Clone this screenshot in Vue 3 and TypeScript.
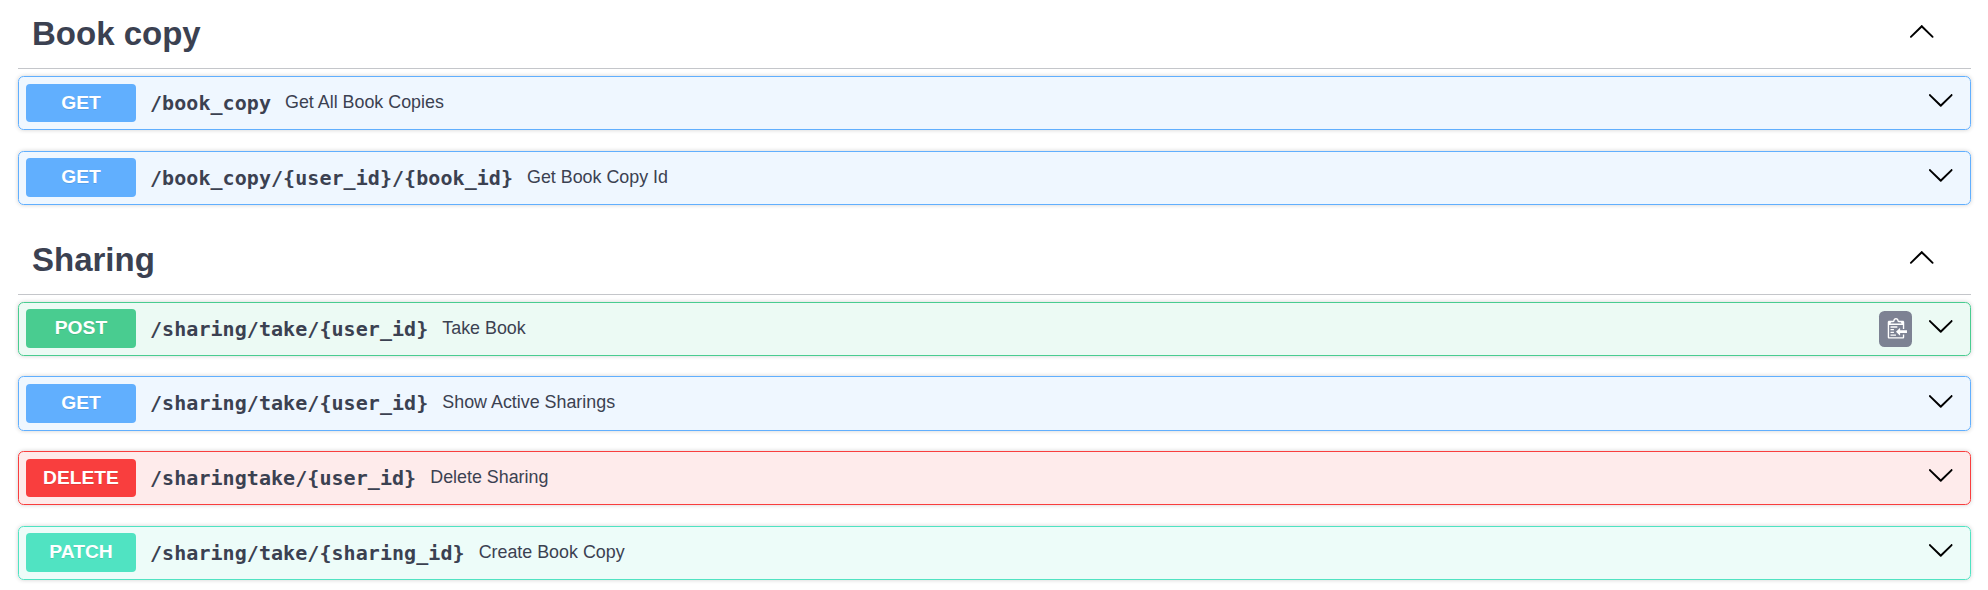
<script setup lang="ts">
type Method = 'get' | 'post' | 'delete' | 'patch'

interface Operation {
  method: Method
  path: string
  summary: string
  paste?: boolean
}

interface Section {
  name: string
  operations: Operation[]
}

const sections: Section[] = [
  {
    name: 'Book copy',
    operations: [
      { method: 'get', path: '/book_copy', summary: 'Get All Book Copies' },
      { method: 'get', path: '/book_copy/{user_id}/{book_id}', summary: 'Get Book Copy Id' },
    ],
  },
  {
    name: 'Sharing',
    operations: [
      { method: 'post', path: '/sharing/take/{user_id}', summary: 'Take Book', paste: true },
      { method: 'get', path: '/sharing/take/{user_id}', summary: 'Show Active Sharings' },
      { method: 'delete', path: '/sharingtake/{user_id}', summary: 'Delete Sharing' },
      { method: 'patch', path: '/sharing/take/{sharing_id}', summary: 'Create Book Copy' },
    ],
  },
]
</script>

<template>
  <main class="api">
    <section v-for="section in sections" :key="section.name" class="section">
      <header class="section-head">
        <h3 class="section-title">{{ section.name }}</h3>
        <svg class="arrow" viewBox="0 0 20 20" aria-hidden="true">
          <path d="M17.418 14.908c.272.268.709.268.979 0s.271-.701 0-.969l-7.908-7.83c-.27-.268-.707-.268-.979 0l-7.908 7.83c-.271.268-.271.701 0 .969.271.268.709.268.979 0L10 7.767l7.418 7.141z" />
        </svg>
      </header>
      <div class="operations">
        <article
          v-for="op in section.operations"
          :key="op.method + op.path"
          class="operation"
          :class="op.method"
        >
          <span class="method">{{ op.method.toUpperCase() }}</span>
          <span class="path">{{ op.path }}</span>
          <span class="summary">{{ op.summary }}</span>
          <span v-if="op.paste" class="paste">
            <svg viewBox="0 0 15 16" aria-hidden="true">
              <g transform="translate(2, -1)">
                <path d="M2 13h4v1H2v-1zm5-6H2v1h5V7zm2 3V8l-3 3 3 3v-2h5v-2H9zM4.5 9H2v1h2.5V9zM2 12h2.5v-1H2v1zm9 1h1v2c-.02.28-.11.52-.3.7-.19.18-.42.28-.7.3H1c-.55 0-1-.45-1-1V4c0-.55.45-1 1-1h3c0-1.11.89-2 2-2 1.11 0 2 .89 2 2h3c.55 0 1 .45 1 1v5h-1V6H1v9h10v-2zM2 5h8c0-.55-.45-1-1-1H8c-.55 0-1-.45-1-1s-.45-1-1-1-1 .45-1 1-.45 1-1 1H3c-.55 0-1 .45-1 1z" />
              </g>
            </svg>
          </span>
          <svg class="arrow" viewBox="0 0 20 20" aria-hidden="true">
            <path d="M17.418 6.109c.272-.268.709-.268.979 0s.271.701 0 .969l-7.908 7.83c-.27.268-.707.268-.979 0l-7.908-7.83c-.271-.268-.271-.701 0-.969.271-.268.709-.268.979 0L10 13.25l7.418-7.141z" />
          </svg>
        </article>
      </div>
    </section>
  </main>
</template>

<style>
body {
  margin: 0;
  background: #fff;
}
</style>

<style scoped>
.api {
  box-sizing: border-box;
  height: 590px;
  padding: 0 17px 0 18px;
  overflow: hidden;
  color: #3b4151;
  font-family: "Liberation Sans", Arial, sans-serif;
}

.section + .section {
  margin-top: 20.5px;
}

.section-head {
  box-sizing: border-box;
  display: flex;
  align-items: flex-start;
  justify-content: space-between;
  height: 69px;
  padding: 15px 36px 0 14px;
  border-bottom: 1px solid rgba(59, 65, 81, 0.3);
}

.section-title {
  margin: 0;
  font-size: 33px;
  font-weight: 700;
  line-height: 38px;
}

.section-head .arrow {
  margin-top: 2px;
}

.arrow {
  flex: none;
  width: 27.5px;
  height: 27.5px;
  fill: #000;
}

.operations {
  display: grid;
  gap: 20.45px;
  padding-top: 7px;
}

.operation {
  box-sizing: border-box;
  display: flex;
  align-items: center;
  height: 54.3px;
  padding: 0 16px 0 7px;
  border: 1px solid;
  border-radius: 5.5px;
  box-shadow: 0 0 4px rgba(0, 0, 0, 0.19);
}

.operation .arrow {
  margin: 0 0 6px 15px;
}

.method {
  flex: none;
  width: 110px;
  height: 38.6px;
  margin-bottom: 0.3px;
  border-radius: 4px;
  color: #fff;
  font-size: 19.25px;
  font-weight: 700;
  line-height: 37px;
  text-align: center;
  text-shadow: 0 1px 0 rgba(0, 0, 0, 0.1);
}

.path {
  margin-left: 14px;
  font-family: "DejaVu Sans Mono", monospace;
  font-size: 20px;
  font-weight: 700;
  letter-spacing: 0.06px;
  line-height: 26px;
}

.summary {
  flex: 1;
  margin: 0 0 2px 14px;
  font-size: 17.875px;
  line-height: 22px;
}

.paste {
  display: flex;
  align-items: center;
  justify-content: center;
  width: 33px;
  height: 35.75px;
  border-radius: 5.5px;
  background: #7d8293;
}

.paste svg {
  width: 20.6px;
  height: 22px;
  overflow: visible;
  fill: #fff;
}

.get {
  border-color: #61affe;
  background: rgba(97, 175, 254, 0.1);
}

.get .method {
  background: #61affe;
}

.post {
  border-color: #49cc90;
  background: rgba(73, 204, 144, 0.1);
}

.post .method {
  background: #49cc90;
}

.delete {
  border-color: #f93e3e;
  background: rgba(249, 62, 62, 0.1);
}

.delete .method {
  background: #f93e3e;
}

.patch {
  border-color: #50e3c2;
  background: rgba(80, 227, 194, 0.1);
}

.patch .method {
  background: #50e3c2;
}
</style>
